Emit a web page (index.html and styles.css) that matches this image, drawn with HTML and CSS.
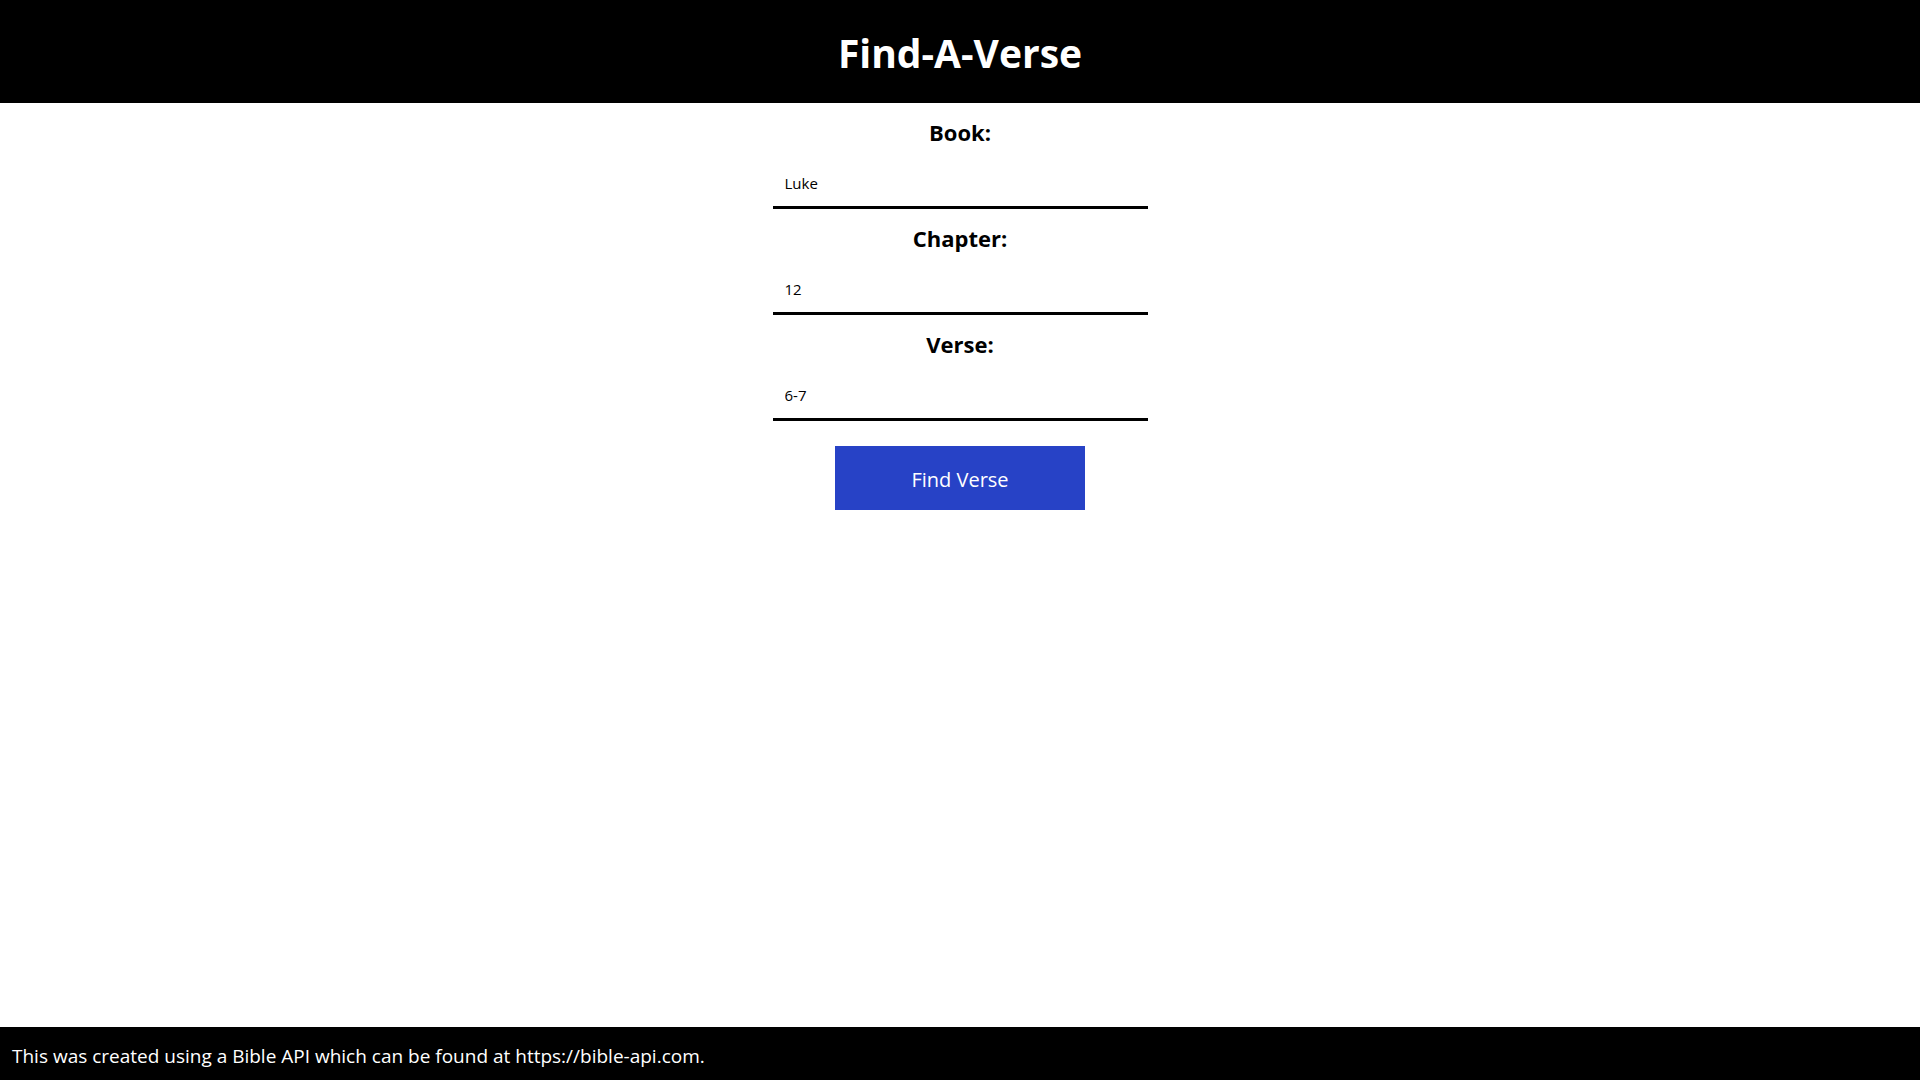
FILE: index.html
```html
<!DOCTYPE html>
<html lang="en">
<head>
<meta charset="utf-8">
<title>Find-A-Verse</title>
<link rel="stylesheet" href="styles.css">
</head>
<body>
<header class="site-header">
  <h1 class="site-title">Find-A-Verse</h1>
</header>
<main class="finder">
  <form class="finder-form">
    <div class="field">
      <label class="field-label" for="book">Book:</label>
      <input class="field-input" id="book" type="text" value="Luke">
    </div>
    <div class="field">
      <label class="field-label" for="chapter">Chapter:</label>
      <input class="field-input" id="chapter" type="text" value="12">
    </div>
    <div class="field">
      <label class="field-label" for="verse">Verse:</label>
      <input class="field-input" id="verse" type="text" value="6-7">
    </div>
    <button class="find-btn" type="button">Find Verse</button>
  </form>
</main>
<footer class="site-footer">
  <p class="footer-text">This was created using a Bible API which can be found at https://bible-api.com.</p>
</footer>
</body>
</html>
```

FILE: styles.css
```css
* { box-sizing: border-box; }
html, body { height: 100%; }
body {
  margin: 0;
  font-family: "Open Sans", "Noto Sans", sans-serif;
  color: #000;
  background: #fff;
  display: flex;
  flex-direction: column;
}
.site-header {
  background: #000;
  height: 103px;
  display: flex;
  align-items: center;
  justify-content: center;
}
.site-title {
  margin: 0;
  color: #fff;
  font-size: 39px;
  font-weight: 700;
  line-height: 1;
  padding-top: 2px;
  letter-spacing: 0;
}
.finder {
  flex: 1;
  display: flex;
  justify-content: center;
  padding-top: 0;
}
.finder-form {
  width: 375px;
  display: flex;
  flex-direction: column;
  align-items: center;
}
.field {
  width: 100%;
  display: flex;
  flex-direction: column;
  align-items: center;
}
.field-label {
  font-size: 22px;
  font-weight: 700;
  line-height: 32px;
  margin: 13px 0 11px;
}
.field-input {
  width: 100%;
  height: 50px;
  border: none;
  border-bottom: 3px solid #000;
  padding: 0 12px;
  font-family: inherit;
  font-size: 15px;
  color: #000;
  background: #fff;
  outline: none;
}
.find-btn {
  margin-top: 25px;
  width: 250px;
  height: 64px;
  border: none;
  background: #2742c6;
  color: #fff;
  font-family: inherit;
  font-size: 20px;
  padding-top: 4px;
  cursor: pointer;
}
.site-footer {
  background: #000;
  height: 53px;
  display: flex;
  align-items: center;
  padding: 4px 12px 0;
}
.footer-text {
  margin: 0;
  color: #fff;
  font-size: 19px;
}
```
